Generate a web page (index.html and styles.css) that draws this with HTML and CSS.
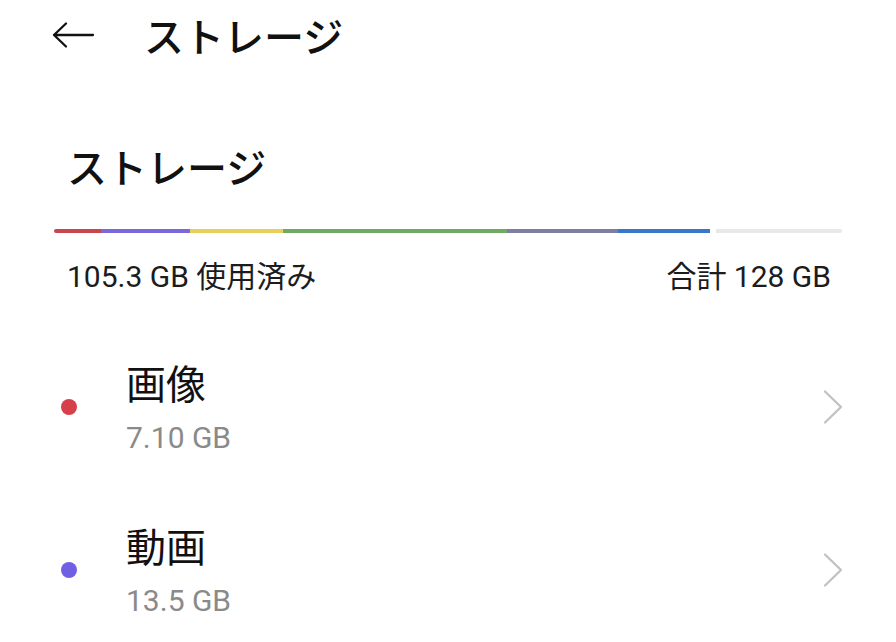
FILE: index.html
```html
<!DOCTYPE html>
<html lang="ja">
<head>
<meta charset="utf-8">
<link rel="stylesheet" href="styles.css">
</head>
<body>
<div class="app">
  <header class="topbar">
    <svg class="back" width="44" height="28" viewBox="0 0 44 28"><path d="M42 14H3M15 2.5L3 14l12 11.5" fill="none" stroke="#111" stroke-width="2.3" stroke-linecap="round" stroke-linejoin="round"/></svg>
    <h1 class="title">ストレージ</h1>
  </header>
  <section class="storage">
    <h2 class="heading">ストレージ</h2>
    <div class="bar">
      <span class="seg red" style="width:47px"></span>
      <span class="seg purple" style="width:89px"></span>
      <span class="seg yellow" style="width:93px"></span>
      <span class="seg green" style="width:224px"></span>
      <span class="seg slate" style="width:111px"></span>
      <span class="seg blue" style="width:92px"></span>
      <span class="seg rest"></span>
    </div>
    <div class="totals">
      <span>105.3 GB 使用済み</span>
      <span>合計 128 GB</span>
    </div>
    <ul class="list">
      <li class="item">
        <span class="dot dot-red"></span>
        <div class="text">
          <div class="name">画像</div>
          <div class="size">7.10 GB</div>
        </div>
        <svg class="chev" width="22" height="36" viewBox="0 0 22 36"><path d="M3 2.5l16 15.5L3 33.5" fill="none" stroke="#c2c2c2" stroke-width="2.4" stroke-linecap="round" stroke-linejoin="round"/></svg>
      </li>
      <li class="item">
        <span class="dot dot-purple"></span>
        <div class="text">
          <div class="name">動画</div>
          <div class="size">13.5 GB</div>
        </div>
        <svg class="chev" width="22" height="36" viewBox="0 0 22 36"><path d="M3 2.5l16 15.5L3 33.5" fill="none" stroke="#c2c2c2" stroke-width="2.4" stroke-linecap="round" stroke-linejoin="round"/></svg>
      </li>
    </ul>
  </section>
</div>
</body>
</html>
```
FILE: styles.css
```css
* { box-sizing: border-box; margin: 0; padding: 0; }
html, body { background: #fff; }
body {
  font-family: Roboto, "Noto Sans CJK JP", sans-serif;
  color: #111;
  width: 896px;
  height: 642px;
  overflow: hidden;
}
.topbar {
  display: flex;
  align-items: center;
  height: 70px;
  padding-left: 51px;
}
.back { display: block; margin-right: 49px; }
.title {
  font-family: "Noto Sans CJK JP", sans-serif;
  font-size: 40px;
  font-weight: 500;
  line-height: 1;
}
.storage { padding: 76px 54px 0 54px; }
.heading {
  font-family: "Noto Sans CJK JP", sans-serif;
  font-size: 40px;
  font-weight: 500;
  line-height: 1;
  padding-left: 13px;
}
.bar {
  display: flex;
  height: 4px;
  margin-top: 43px;
  border-radius: 2px;
  overflow: hidden;
}
.seg { display: block; height: 100%; flex: none; }
.red { background: #c8474f; }
.purple { background: #7a68dc; }
.yellow { background: #e9cf5c; }
.green { background: #70a964; }
.slate { background: #7c7f9f; }
.blue { background: #3b77c8; }
.rest { flex: 1; background: #e8e8e8; margin-left: 6px; }
.totals {
  display: flex;
  justify-content: space-between;
  padding: 0 11px 0 13px;
  margin-top: 26px;
  font-size: 30px;
  line-height: 36px;
  color: #1c1c1c;
}
.list { list-style: none; margin-top: 30px; }
.item {
  display: flex;
  align-items: center;
  height: 163px;
}
.dot {
  width: 16px;
  height: 16px;
  border-radius: 50%;
  margin-left: 7px;
  flex: none;
}
.dot-red { background: #d6404a; }
.dot-purple { background: #7160e2; }
.text { flex: 1; margin-left: 49px; }
.name {
  font-family: "Noto Sans CJK JP", sans-serif;
  font-size: 40px;
  line-height: 48px;
}
.size {
  font-size: 30px;
  line-height: 36px;
  color: #8a8a8a;
  margin-top: 14px;
}
.chev { display: block; flex: none; margin-right: -2px; }
```
